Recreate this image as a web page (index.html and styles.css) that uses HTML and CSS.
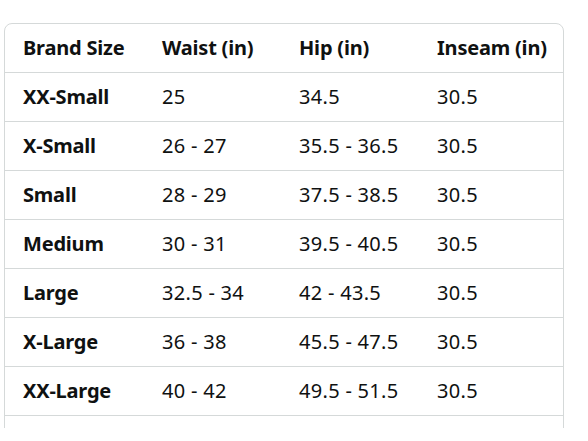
FILE: index.html
```html
<!DOCTYPE html>
<html>
<head>
<meta charset="utf-8">
<link rel="stylesheet" href="styles.css">
</head>
<body>
<div class="wrap">
<table class="sizes">
<colgroup>
<col class="c1"><col class="c2"><col class="c3"><col class="c4">
</colgroup>
<thead>
<tr><th>Brand Size</th><th>Waist (in)</th><th>Hip (in)</th><th>Inseam (in)</th></tr>
</thead>
<tbody>
<tr><th>XX-Small</th><td>25</td><td>34.5</td><td>30.5</td></tr>
<tr><th>X-Small</th><td>26 - 27</td><td>35.5 - 36.5</td><td>30.5</td></tr>
<tr><th>Small</th><td>28 - 29</td><td>37.5 - 38.5</td><td>30.5</td></tr>
<tr><th>Medium</th><td>30 - 31</td><td>39.5 - 40.5</td><td>30.5</td></tr>
<tr><th>Large</th><td>32.5 - 34</td><td>42 - 43.5</td><td>30.5</td></tr>
<tr><th>X-Large</th><td>36 - 38</td><td>45.5 - 47.5</td><td>30.5</td></tr>
<tr><th>XX-Large</th><td>40 - 42</td><td>49.5 - 51.5</td><td>30.5</td></tr>
<tr class="empty"><th></th><td></td><td></td><td></td></tr>
</tbody>
</table>
</div>
</body>
</html>
```
FILE: styles.css
```css
html, body {
  margin: 0;
  padding: 0;
  background: #fff;
  overflow: hidden;
}
body {
  width: 588px;
  height: 441px;
  font-family: "Noto Sans", "Open Sans", sans-serif;
  color: #0f1111;
}
.wrap {
  margin: 23px 0 0 4px;
  width: 560px;
  height: 405px;
  overflow: hidden;
}
.sizes {
  width: 560px;
  border-collapse: separate;
  border-spacing: 0;
  table-layout: fixed;
  border: 1px solid #d5d9d9;
  border-radius: 8px 8px 0 0;
}
.c1 { width: 139px; }
.c2 { width: 137px; }
.c3 { width: 138px; }
.c4 { width: auto; }
.sizes th, .sizes td {
  height: 47px;
  padding: 0 0 1px 18px;
  text-align: left;
  font-size: 20px;
  letter-spacing: 0.3px;
  border-bottom: 1px solid #d5d9d9;
  vertical-align: middle;
  white-space: nowrap;
}
.sizes th {
  font-weight: 700;
  letter-spacing: -0.2px;
}
.sizes td {
  font-weight: 400;
}
```
